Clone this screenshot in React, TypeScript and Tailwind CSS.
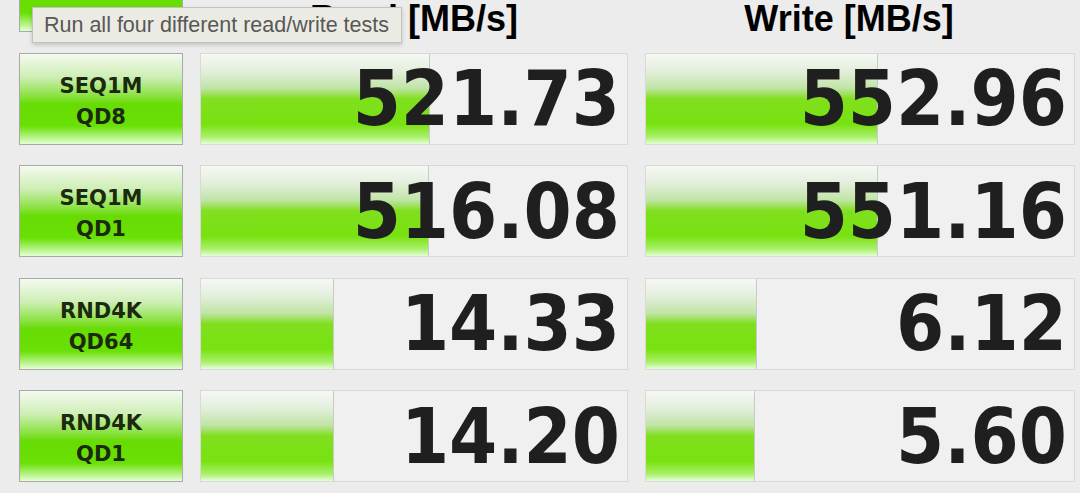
import React from 'react';

interface Row {
  top: string;
  bottom: string;
  read: string;
  readBar: number;
  write: string;
  writeBar: number;
}

const rows: Row[] = [
  { top: 'SEQ1M', bottom: 'QD8', read: '521.73', readBar: 229, write: '552.96', writeBar: 232 },
  { top: 'SEQ1M', bottom: 'QD1', read: '516.08', readBar: 228, write: '551.16', writeBar: 232 },
  { top: 'RND4K', bottom: 'QD64', read: '14.33', readBar: 133, write: '6.12', writeBar: 111 },
  { top: 'RND4K', bottom: 'QD1', read: '14.20', readBar: 133, write: '5.60', writeBar: 109 },
];

const btnBg =
  'bg-[linear-gradient(to_bottom,#f4faf0_0%,#cdeeb4_26%,#93e350_44%,#66dc02_56%,#6ae006_80%,#b8f48a_93%,#e4ffd6_100%)]';
const barBg =
  'bg-[linear-gradient(to_bottom,#f6f8f4_0%,#e4efdd_18%,#c0e4a6_38%,#80df1e_50%,#78e210_78%,#a8f068_92%,#e4ffd6_100%)]';

const TestButton: React.FC<{ top: string; bottom?: string; className?: string }> = ({ top, bottom, className }) => (
  <div
    className={`flex flex-col items-center justify-center border border-[#a9a9a9] ${btnBg} text-[#1b2a0e] font-['DejaVu_Sans',sans-serif] font-bold text-[21px] leading-[31px] ${className ?? ''}`}
  >
    <span>{top}</span>
    {bottom && <span>{bottom}</span>}
  </div>
);

const ResultCell: React.FC<{ value: string; bar: number }> = ({ value, bar }) => (
  <div className="relative flex items-center justify-end border border-[#d9d9d9] bg-[#f0f0f0] pr-[7px]">
    <div
      className={`absolute left-0 top-0 bottom-0 border-r border-[#c9c9c9] ${barBg}`}
      style={{ width: bar }}
    />
    <span className="relative font-['DejaVu_Sans_Condensed','DejaVu_Sans',sans-serif] [font-stretch:condensed] font-bold text-[77px] leading-none text-[#1f1f1f]">
      {value}
    </span>
  </div>
);

export default function App() {
  return (
    <div className="relative h-[493px] w-[1080px] overflow-hidden bg-[#ececec]">
      <div className="mt-[-60px] grid grid-cols-[164px_428px_430px] grid-rows-[92px_92px_92px_92px_92px] gap-x-[17px] gap-y-[20.5px] pl-[19px]">
        <TestButton top="All" className="justify-end pb-[22px]" />
        <div className="flex items-end justify-center">
          <span className="mb-[-5px] font-['Liberation_Sans',Arial,sans-serif] font-bold text-[36px] leading-[36px] text-black">
            Read [MB/s]
          </span>
        </div>
        <div className="flex items-end justify-center pr-[22px]">
          <span className="mb-[-5px] font-['Liberation_Sans',Arial,sans-serif] font-bold text-[36px] leading-[36px] text-black">
            Write [MB/s]
          </span>
        </div>

        {rows.map((r, i) => (
          <React.Fragment key={i}>
            <TestButton top={r.top} bottom={r.bottom} className="pt-[6px]" />
            <ResultCell value={r.read} bar={r.readBar} />
            <ResultCell value={r.write} bar={r.writeBar} />
          </React.Fragment>
        ))}
      </div>

      {/* tooltip over the All button */}
      <div className="absolute left-[32px] top-[7px] flex h-[36px] w-[370px] items-center border border-[#c3c3c3] bg-[#ecebe3] pl-[11px] shadow-[0_2px_4px_rgba(0,0,0,0.18)]">
        <span className="font-['Liberation_Sans',Arial,sans-serif] text-[21.5px] text-[#585858] whitespace-nowrap">
          Run all four different read/write tests
        </span>
      </div>
    </div>
  );
}
